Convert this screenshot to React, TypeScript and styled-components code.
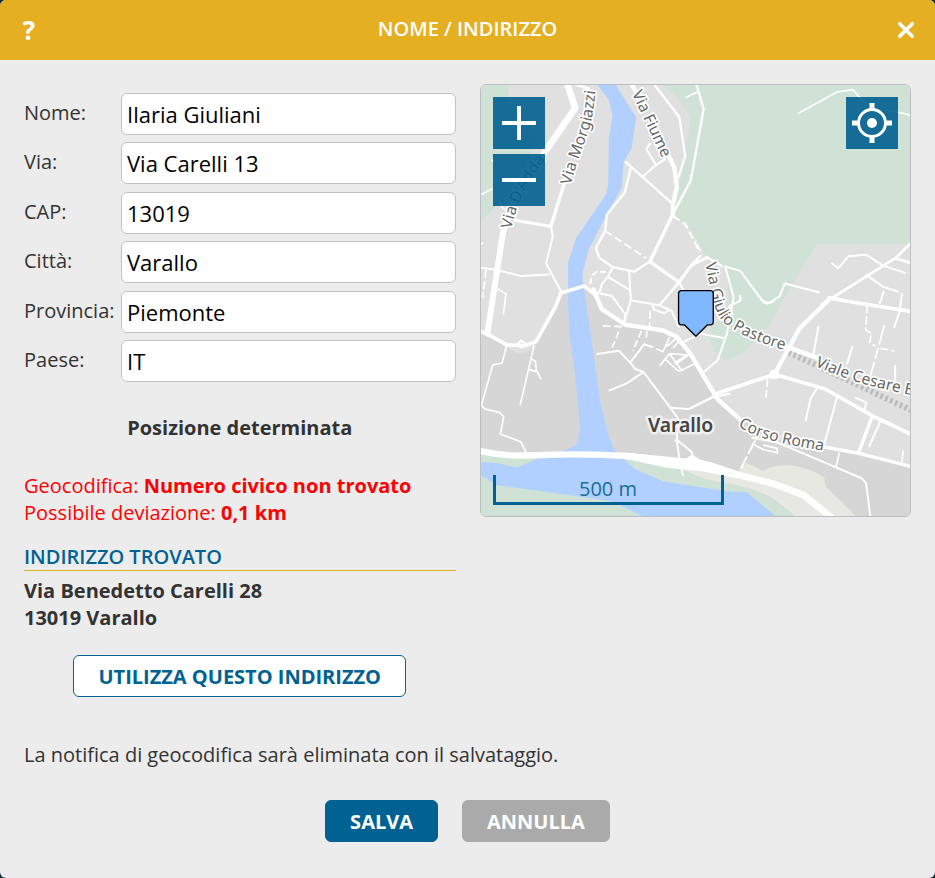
import React, { useState } from 'react';
import styled, { createGlobalStyle, css } from 'styled-components';

const BLUE = '#006292';
const GOLD = '#e5af22';

const GlobalStyle = createGlobalStyle`
  *, *::before, *::after { box-sizing: border-box; }
  body {
    margin: 0;
    background: #0b2b3c;
    color: #333;
    font-family: "Open Sans", "Noto Sans", sans-serif;
    font-size: 20px;
    line-height: 27px;
  }
  button, input { font-family: inherit; }
`;

const Dialog = styled.main`
  display: flex;
  flex-direction: column;
  min-height: 100vh;
  overflow: hidden;
  border-radius: 6px;
  background: #ececec;
`;

const Header = styled.header`
  display: grid;
  grid-template-columns: 58px 1fr 58px;
  height: 60px;
  background: ${GOLD};
  color: #fff;
`;

const Title = styled.h1`
  margin: 0;
  font-size: 20px;
  font-weight: 600;
  line-height: 58px;
  text-align: center;
`;

const HeaderButton = styled.button`
  display: flex;
  align-items: center;
  justify-content: center;
  padding: 0;
  border: 0;
  background: none;
  color: inherit;
  font-size: 26px;
  font-weight: 700;
  line-height: 58px;
  cursor: pointer;
`;

const Body = styled.form`
  padding: 24px 24px 36px;
`;

const Columns = styled.div`
  display: grid;
  grid-template-columns: 1fr 1fr;
  align-items: start;
  gap: 24px;
`;

const Fields = styled.div`
  display: flex;
  flex-direction: column;
  justify-content: space-between;
  min-height: 289px;
  margin-top: 9px;
`;

const Field = styled.div`
  display: grid;
  grid-template-columns: 97px 1fr;
`;

const FieldLabel = styled.label`
  padding-top: 6px;
`;

const TextBox = styled.input`
  width: 100%;
  height: 42px;
  padding: 0 5px;
  border: 1px solid #bfc3c6;
  border-radius: 6px;
  background: #fff;
  color: #000;
  font-size: 22px;
`;

const Status = styled.p`
  margin: 32px 0 31px;
  font-weight: 700;
  text-align: center;
`;

const Warning = styled.p`
  margin: 0;
  color: #f00;
`;

const SectionTitle = styled.h2`
  margin: 17px 0 6px;
  border-bottom: 1px solid ${GOLD};
  color: ${BLUE};
  font-size: 20px;
  font-weight: 600;
`;

const Address = styled.address`
  font-style: normal;
  font-weight: 700;
`;

const Centered = styled.div`
  display: flex;
  justify-content: center;
  gap: 24px;
  margin-top: ${(p: { $top: number }) => p.$top}px;
`;

const Button = styled.button<{ $kind: 'outline' | 'primary' | 'muted' }>`
  height: 42px;
  padding: 0 24px;
  border: 1px solid transparent;
  border-radius: 6px;
  font-size: 20px;
  font-weight: 700;
  line-height: 27px;
  cursor: pointer;
  ${(p) =>
    p.$kind === 'outline'
      ? css`
          border-color: ${BLUE};
          background: #fff;
          color: ${BLUE};
        `
      : css`
          border-color: ${p.$kind === 'primary' ? BLUE : '#aaa'};
          background: ${p.$kind === 'primary' ? BLUE : '#aaa'};
          color: #fff;
        `}
`;

const Note = styled.p`
  margin: 44px 0 0;
`;

const MapFrame = styled.section`
  position: relative;
  overflow: hidden;
  aspect-ratio: 431 / 432;
  border: 1px solid #bbbec2;
  border-radius: 6px;
`;

const MapDrawing = styled.svg`
  display: block;
  width: 100%;
  height: 100%;
  font-family: "Noto Sans", "Open Sans", sans-serif;
`;

const MapControls = styled.div<{ $side: 'left' | 'right' }>`
  position: absolute;
  top: 12px;
  ${(p) => p.$side}: 12px;
  display: grid;
  gap: 5px;
`;

const MapButton = styled.button`
  width: 52px;
  height: 52px;
  padding: 0;
  border: 0;
  background: rgba(0, 96, 144, 0.9);
  cursor: pointer;
  svg { display: block; }
`;

const ScaleBar = styled.div`
  position: absolute;
  bottom: 11px;
  left: 12px;
  width: 231px;
  height: 30px;
  border: 3px solid ${BLUE};
  border-top: 0;
  color: #176e96;
  text-align: center;
`;

const Road = styled.path<{ $w: number; $dash?: string }>`
  fill: none;
  stroke: #fff;
  stroke-width: ${(p) => p.$w};
  stroke-linejoin: round;
  stroke-linecap: ${(p) => (p.$dash ? 'butt' : 'round')};
  stroke-dasharray: ${(p) => p.$dash ?? 'none'};
`;

const StreetName = styled.text`
  fill: #666;
  stroke: #fff;
  stroke-width: 10;
  stroke-linejoin: round;
  paint-order: stroke;
  font-size: 47px;
`;

const TownName = styled(StreetName)`
  fill: #444;
  stroke: #f0f0f0;
  stroke-width: 15;
  font-size: 58px;
  font-weight: 600;
`;

const roads: { w: number; d: string; dash?: string }[] = [
  // Via D'Adda and the western streets
  { w: 20, d: 'M262 0 L285 72 L200 196' },
  { w: 18, d: 'M200 196 L92 360 L68 450 L22 748' },
  { w: 9, d: 'M285 0 L325 14 L338 40' },
  { w: 10, d: 'M252 300 L213 424' },
  { w: 9, d: 'M105 408 L213 427' },
  { w: 6, d: 'M213 427 L218 458 L198 537 L243 622' },
  { w: 6, d: 'M0 550 L45 556 L122 575 L207 571' },
  { w: 5, d: 'M50 612 L78 629 L70 688' },
  { w: 5, d: 'M18 556 L8 640', dash: '25 9' },
  { w: 5, d: 'M0 333 L36 315 M36 228 L46 238 M0 482 L8 476 M58 350 L66 370 L78 378' },
  { w: 11, d: 'M243 626 L227 666 L168 772 L132 784 L80 782 L20 748 L0 742' },
  { w: 11, d: 'M243 626 L312 605 L350 635' },
  { w: 6, d: 'M112 781 L124 768 L136 779 L124 790 Z' },
  { w: 5, d: 'M80 783 L66 836 L38 842 L4 963 L15 974 L58 984 L71 997 L61 1049 L122 1072 L140 1108' },
  { w: 5, d: 'M162 784 L121 960 M153 824 L166 830 L169 858 L182 883 M145 855 L169 862' },
  // Streets around the old town
  { w: 13, d: 'M456 4 L470 28 M564 212 L582 250 L590 308 L578 362 L578 395' },
  { w: 7, d: 'M524 4 L597 99 L615 216 L595 278' },
  { w: 7, d: 'M648 0 L670 75 L632 288 L578 390' },
  { w: 5, d: 'M618 40 L652 24 M630 275 L636 268' },
  { w: 6, d: 'M509 178 L499 195 L527 243 L555 225 M488 277 L527 243' },
  { w: 7, d: 'M437 234 L575 357 M452 250 L434 325 L380 392 L375 440 L347 492 L358 521 L398 549 L463 562 L509 532' },
  { w: 10, d: 'M578 390 L509 532 L596 594' },
  { w: 9, d: 'M596 594 L635 542 L680 520' },
  { w: 7, d: 'M596 594 L540 660 M596 594 L608 615 M660 515 L632 543 M678 518 L724 545' },
  { w: 5, d: 'M375 440 L498 522', dash: '24 11' },
  { w: 6, d: 'M578 395 L615 420 L660 506', dash: '24 11' },
  { w: 5, d: 'M660 500 L645 470', dash: '20 8' },
  { w: 6, d: 'M447 562 L452 648 L431 718 M398 549 L383 578 L365 600 L358 625 M383 578 L447 616' },
  { w: 6, d: 'M330 600 L335 574 L350 562 L378 563', dash: '20 8' },
  { w: 6, d: 'M345 624 L395 635 L435 690 L431 718' },
  { w: 6, d: 'M452 648 L540 664 L574 680 L596 728 M518 664 L520 675 L552 687 L566 678' },
  { w: 13, d: 'M340 616 L365 675 L437 722 L548 738 L590 758 L630 808 L712 945 L785 1010' },
  { w: 5, d: 'M510 680 L508 730 M368 725 L427 727', dash: '24 10' },
  { w: 5, d: 'M416 742 L396 790 M484 740 L458 800 M500 740 L498 760', dash: '22 9' },
  { w: 6, d: 'M352 809 L416 799 L450 835 L492 780 L516 788 M450 835 L466 854 L490 863 L440 897 L388 918' },
  { w: 6, d: 'M490 863 L570 970 L592 1000 L590 1070 L598 1126 L608 1172' },
  { w: 6, d: 'M570 970 L625 974 L700 938 L748 928' },
  { w: 6, d: 'M585 1068 L594 1070 L634 1102 L636 1120' },
  { w: 5, d: 'M530 794 L548 802 L568 760 M540 843 L568 808 L604 858 L640 840 M556 825 L594 860 L605 857 M568 808 L620 812 L584 835 M562 785 L590 760 M580 790 L600 765' },
  { w: 6, d: 'M630 808 L588 838 M600 778 L660 748 L735 762' },
  // Eastern roads
  { w: 6, d: 'M666 867 L712 828 L740 748 L760 640 L735 547 L780 560 L850 655 L868 655 L898 636 L913 598 L1015 624' },
  { w: 6, d: 'M757 690 L748 665 L780 650 L780 635 M842 645 L860 658 L880 652' },
  { w: 5, d: 'M956 87 L1070 24 L1117 17 L1148 52 L1188 74 L1280 90 L1293 98' },
  { w: 6, d: 'M1055 538 L1073 552 L1105 516 L1158 512 L1205 543 L1273 566' },
  { w: 8, d: 'M1293 475 L1245 522 L1025 660 M1245 522 L1293 537' },
  { w: 6, d: 'M1158 572 L1208 608 L1252 622 M1210 622 L1198 656 M1264 630 L1258 680 L1242 728' },
  { w: 11, d: 'M1046 640 L1100 651 L1293 682' },
  { w: 13, d: 'M1046 646 L958 732 L882 870' },
  { w: 14, d: 'M920 788 L1010 820' },
  { w: 6, d: 'M1014 728 L998 815 M1115 788 L1100 838' },
  { w: 5, d: 'M1160 664 L1156 738 L1172 746 L1168 776 L1185 785 M1200 792 L1242 800', dash: '24 9' },
  { w: 5, d: 'M1212 722 L1169 878', dash: '60 10 35 10' },
  { w: 6, d: 'M1244 846 L1244 890' },
  { w: 11, d: 'M705 929 L882 870 L1034 914 L1175 994 L1293 1050' },
  { w: 10, d: 'M874 862 L890 861 L892 878 L875 879 Z' },
  { w: 6, d: 'M705 933 L630 972 M705 929 L665 865' },
  { w: 5, d: 'M862 884 L857 940', dash: '24 9' },
  { w: 6, d: 'M1010 911 L991 942 L976 1008 M1070 938 L1032 1078' },
  { w: 10, d: 'M1175 996 L1135 1104' },
  { w: 6, d: 'M1202 1006 L1166 1086 M1125 940 L1158 955 L1150 982' },
  { w: 10, d: 'M1035 1088 L1137 1107 L1293 1147' },
  { w: 5, d: 'M1076 1106 L1067 1148 M1268 1100 L1264 1135' },
  { w: 6, d: 'M816 1060 L890 1074 L1060 1146 L1145 1182 L1157 1197 L1170 1297' },
  { w: 5, d: 'M828 1060 L820 1080 L850 1096 L892 1105 L890 1092 L850 1082' },
  { w: 6, d: 'M822 1072 L775 1166', dash: '40 10' },
  // Southern ring road
  { w: 19, d: 'M0 1100 C100 1122 160 1110 270 1110 C370 1110 450 1112 520 1124 L660 1144' },
  { w: 20, d: 'M690 1144 L770 1170 L880 1198 L970 1232 L1064 1308' },
];

function StreetMap() {
  return (
    <MapDrawing viewBox="3 3 1287 1290" preserveAspectRatio="xMidYMid slice" role="img" aria-label="Mappa di Varallo">
      <path fill="#e0e0e0" d="M0 0H1293V1299H0Z" />
      <path
        fill="#d6d6d6"
        d="M0 745L80 782L165 774L243 622L315 605L365 675L437 722L548 738L600 762L705 929L790 1012L890 1064L1293 1146V1299H0Z"
      />
      <path fill="#e0e0e0" d="M80 782C95 812 138 812 158 790L165 774Z" />
      <path
        fill="#d0e2d6"
        d="M0 0H86V60L165 170C140 270 90 330 52 365L0 412Z M540 0H1293V480H1010L903 655C880 730 790 812 745 826C722 828 700 802 688 765V730L732 700C750 650 745 595 735 545L675 515L628 430L580 392L606 250C600 200 635 160 627 95C600 40 570 20 540 0Z"
      />
      <path fill="#d0e2d6" d="M0 1110L200 1125L430 1120L630 1155L770 1175L880 1250L960 1299H0Z" />
      <path
        fill="#e7e8e2"
        d="M600 1150L770 1165L797 1136C825 1145 840 1160 852 1158C900 1128 980 1145 1031 1178L1036 1206L1130 1299H950C880 1240 850 1220 760 1200L680 1185L640 1170Z"
      />
      <path
        fill="#b1d0ff"
        d="M350 0L386 48L397 96L386 165L384 300L379 328L288 462L264 535L264 665L269 755L285 870L300 1030L291 1082L245 1102L180 1120L112 1149L50 1136L0 1133V1170L50 1202L240 1228L400 1252L495 1299H890L800 1223L740 1220L550 1191L465 1154L404 1100L384 1050L360 950L316 640L308 590V565L325 498L379 392L425 310L430 235L454 194L468 100L405 0Z"
      />
      <path d="M925 804L1293 978" stroke="#bcbcbc" strokeWidth="18" strokeDasharray="8 8" fill="none" />
      {roads.map((road) => (
        <Road key={road.d} d={road.d} $w={road.w} $dash={road.dash} />
      ))}
      <path fill="#fff" d="M430 1104L618 1122L636 1110L660 1126L700 1136L775 1162V1182L660 1160L560 1150L430 1122Z" />
      <defs>
        <path id="dadda" d="M94 435C108 360 142 292 212 206" />
        <path id="morgiazzi" d="M273 303C285 240 325 155 336 100L348 10" />
        <path id="fiume" d="M455 28L556 244" />
        <path id="pastore" d="M675 538C696 640 702 702 750 730C798 758 850 784 970 812" />
        <path id="cesare" d="M1003 844C1080 880 1160 907 1330 940" />
        <path id="roma" d="M773 1024C828 1064 900 1078 1070 1106" />
      </defs>
      <StreetName><textPath href="#dadda">Via D'Adda</textPath></StreetName>
      <StreetName><textPath href="#morgiazzi">Via Morgiazzi</textPath></StreetName>
      <StreetName><textPath href="#fiume">Via Fiume</textPath></StreetName>
      <StreetName><textPath href="#pastore">Via Giulio Pastore</textPath></StreetName>
      <StreetName><textPath href="#cesare">Viale Cesare Battisti</textPath></StreetName>
      <StreetName><textPath href="#roma">Corso Roma</textPath></StreetName>
      <TownName x="601" y="1042" textAnchor="middle">Varallo</TownName>
      <path
        d="M604 619H690Q699 619 699 628V712Q699 722 690 722H681L647 756L613 722H604Q595 722 595 712V628Q595 619 604 619Z"
        fill="#7fb8ff"
        stroke="#000"
        strokeWidth="4"
        strokeLinejoin="round"
      />
    </MapDrawing>
  );
}

function StrokeIcon({ d }: { d: string }) {
  return (
    <svg width="52" height="52" viewBox="0 0 52 52" fill="none" stroke="#fff" strokeWidth="4" aria-hidden="true">
      <path d={d} />
    </svg>
  );
}

const initialFields = [
  { id: 'nome', label: 'Nome:', value: 'Ilaria Giuliani' },
  { id: 'via', label: 'Via:', value: 'Via Carelli 13' },
  { id: 'cap', label: 'CAP:', value: '13019' },
  { id: 'citta', label: 'Città:', value: 'Varallo' },
  { id: 'provincia', label: 'Provincia:', value: 'Piemonte' },
  { id: 'paese', label: 'Paese:', value: 'IT' },
];

export default function App() {
  const [fields, setFields] = useState(initialFields);
  const update = (id: string, value: string) =>
    setFields((all) => all.map((f) => (f.id === id ? { ...f, value } : f)));

  return (
    <>
      <GlobalStyle />
      <Dialog>
        <Header>
          <HeaderButton type="button">?</HeaderButton>
          <Title>NOME / INDIRIZZO</Title>
          <HeaderButton type="button" aria-label="Chiudi">
            <svg width="18" height="18" viewBox="0 0 18 18" stroke="#fff" strokeWidth="3.5" strokeLinecap="round" aria-hidden="true">
              <path d="M2.7 2.7L15.3 15.3M15.3 2.7L2.7 15.3" />
            </svg>
          </HeaderButton>
        </Header>
        <Body onSubmit={(e) => e.preventDefault()}>
          <Columns>
            <div>
              <Fields>
                {fields.map((f) => (
                  <Field key={f.id}>
                    <FieldLabel htmlFor={f.id}>{f.label}</FieldLabel>
                    <TextBox id={f.id} type="text" value={f.value} onChange={(e) => update(f.id, e.target.value)} />
                  </Field>
                ))}
              </Fields>
              <Status>Posizione determinata</Status>
              <Warning>Geocodifica: <b>Numero civico non trovato</b></Warning>
              <Warning>Possibile deviazione: <b>0,1 km</b></Warning>
              <SectionTitle>INDIRIZZO TROVATO</SectionTitle>
              <Address>
                Via Benedetto Carelli 28<br />
                13019 Varallo
              </Address>
              <Centered $top={24}>
                <Button type="button" $kind="outline">UTILIZZA QUESTO INDIRIZZO</Button>
              </Centered>
            </div>
            <MapFrame>
              <StreetMap />
              <MapControls $side="left">
                <MapButton type="button" aria-label="Ingrandisci"><StrokeIcon d="M9 26H43M26 9V43" /></MapButton>
                <MapButton type="button" aria-label="Riduci"><StrokeIcon d="M9 26H43" /></MapButton>
              </MapControls>
              <MapControls $side="right">
                <MapButton type="button" aria-label="Centra la mappa">
                  <svg width="52" height="52" viewBox="0 0 52 52" fill="none" stroke="#fff" aria-hidden="true">
                    <circle cx="26" cy="26" r="13.5" strokeWidth="3" />
                    <circle cx="26" cy="26" r="5" fill="#fff" stroke="none" />
                    <path d="M26 6V13M26 39V46M6 26H13M39 26H46" strokeWidth="5" />
                  </svg>
                </MapButton>
              </MapControls>
              <ScaleBar>500 m</ScaleBar>
            </MapFrame>
          </Columns>
          <Note>La notifica di geocodifica sarà eliminata con il salvataggio.</Note>
          <Centered $top={32}>
            <Button type="submit" $kind="primary">SALVA</Button>
            <Button type="button" $kind="muted">ANNULLA</Button>
          </Centered>
        </Body>
      </Dialog>
    </>
  );
}
